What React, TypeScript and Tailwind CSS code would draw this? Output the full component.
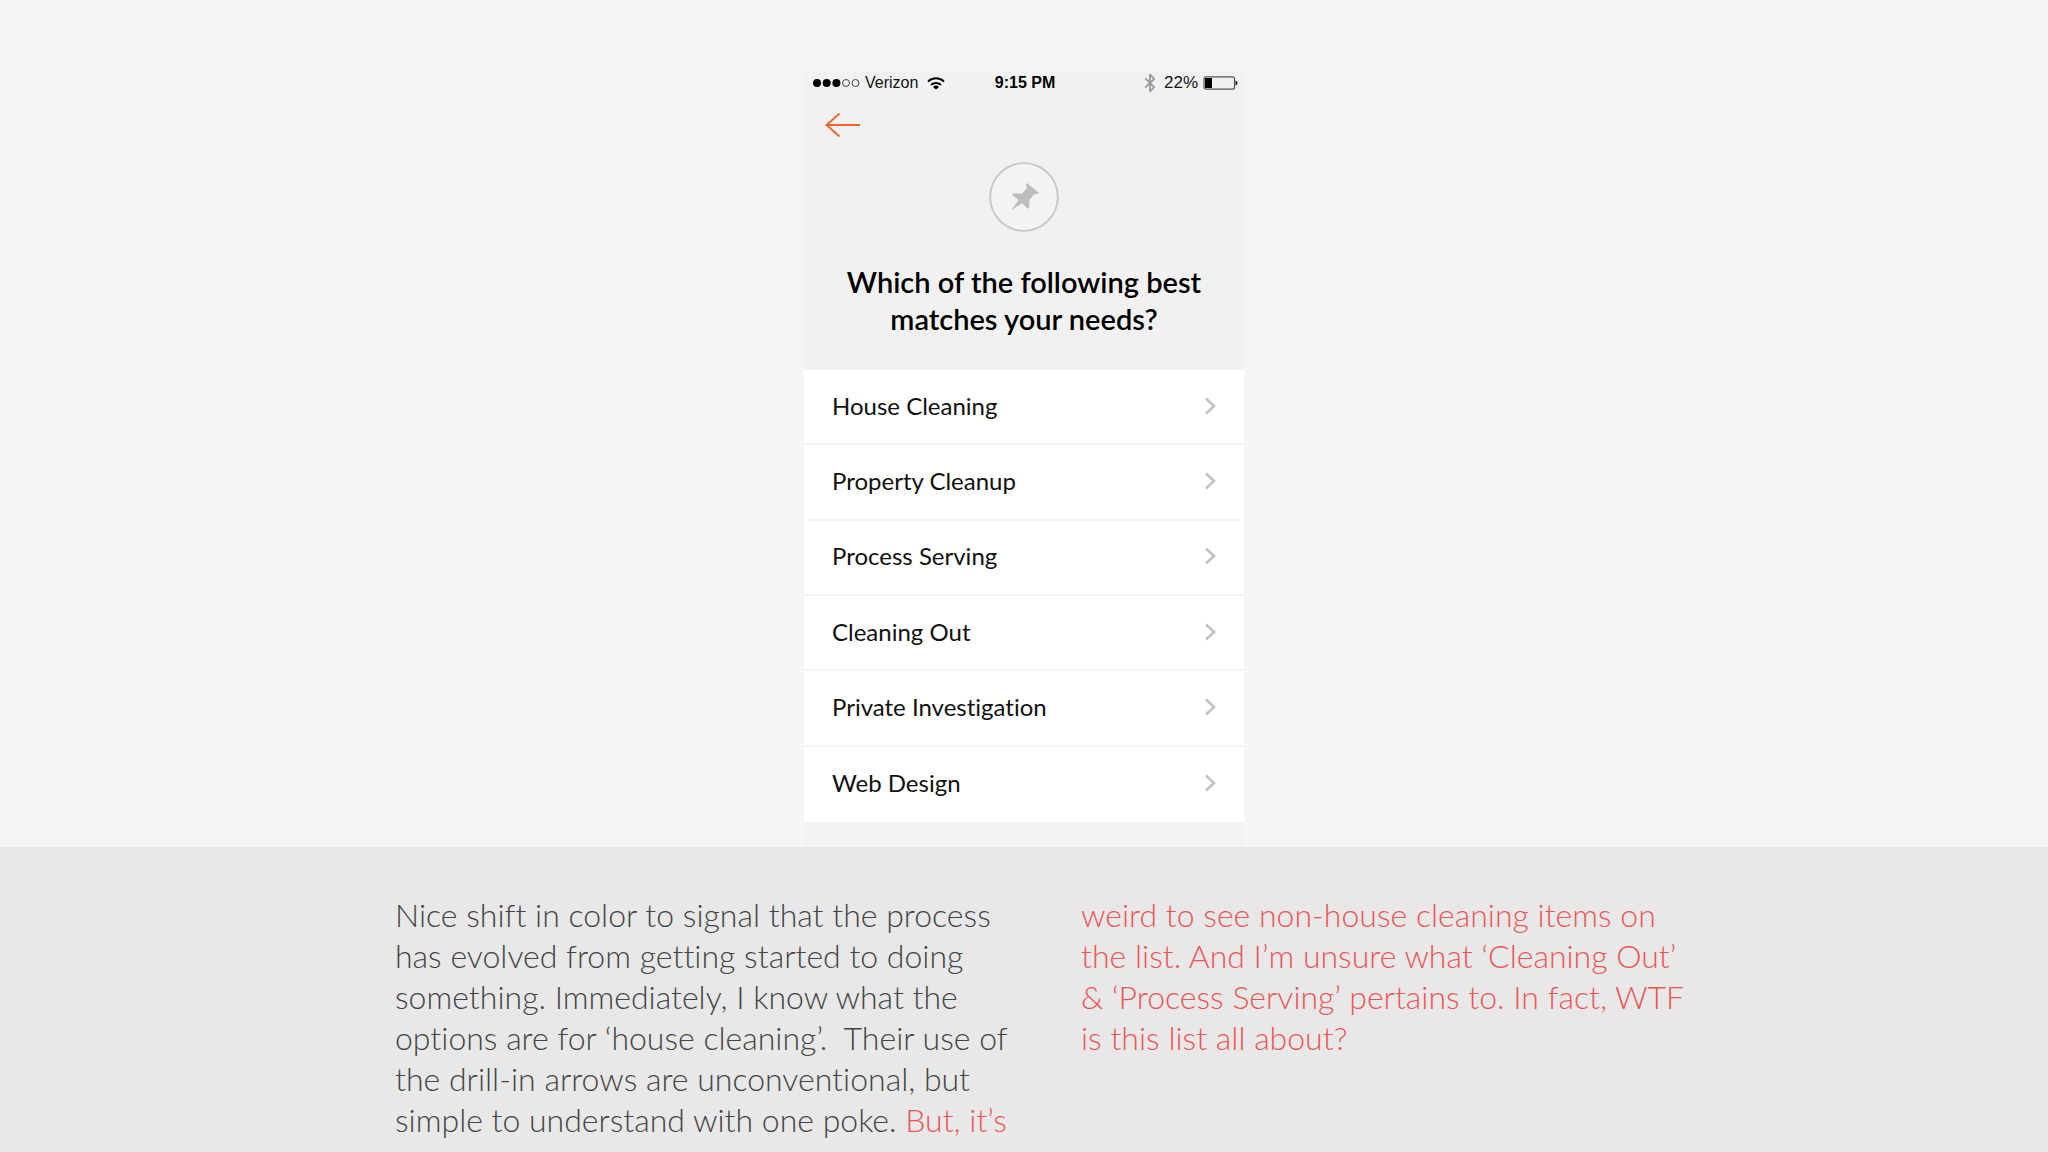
import { Bluetooth } from "lucide-react"

const services = [
    "House Cleaning",
    "Property Cleanup",
    "Process Serving",
    "Cleaning Out",
    "Private Investigation",
    "Web Design",
]

const StatusBar = () => {
    return (
        <div className="grid grid-cols-[1fr_auto_1fr] items-center h-6 pl-2 pr-1.5 font-['Liberation_Sans',sans-serif] text-base leading-6 text-[#111]">
            {/* carrier */}
            <div className="flex items-center">
                <svg width="48" height="10" viewBox="0 0 48 10" className="mr-[5px]">
                    <circle cx="5" cy="5" r="4" fill="#000"/>
                    <circle cx="14.7" cy="5" r="4" fill="#000"/>
                    <circle cx="24.4" cy="5" r="4" fill="#000"/>
                    <circle cx="34" cy="5" r="3.5" fill="none" stroke="#444"/>
                    <circle cx="43.5" cy="5" r="3.5" fill="none" stroke="#444"/>
                </svg>
                Verizon
                <svg width="18" height="13" viewBox="0 0 18 13" fill="none" stroke="#000" strokeWidth="2" className="ml-[9px]">
                    <path d="M1 4.6a11.4 11.4 0 0 1 16 0"/>
                    <path d="M4 7.9a7.2 7.2 0 0 1 10 0"/>
                    <path d="M9 12.6 6 9.9a4.3 4.3 0 0 1 6 0z" fill="#000" stroke="none"/>
                </svg>
            </div>
            {/* time */}
            <div className="font-bold text-black">9:15 PM</div>
            {/* battery */}
            <div className="flex items-center justify-end text-[17px]">
                <Bluetooth width={20} height={20} strokeWidth={2.2} className="text-[#999] mr-1"/>
                22%
                <svg width="35" height="14" viewBox="0 0 35 14" className="ml-[5px]">
                    <rect x="1" y="0.8" width="30.5" height="12.4" rx="2" fill="none" stroke="#555" strokeWidth="1.2"/>
                    <rect x="2" y="2" width="7" height="10" fill="#000"/>
                    <path d="M32.5 4.5q2 .6 2 2.5t-2 2.5z" fill="#111"/>
                </svg>
            </div>
        </div>
    )
}

const Phone = () => {
    return (
        <div className="w-[440px] mx-auto bg-[#f1f1f1] font-[Lato,sans-serif] [font-variant-ligatures:none]">
            <StatusBar/>
            {/* back */}
            <button type="button" aria-label="Back" className="block ml-[21px] mt-[17px] cursor-pointer">
                <svg width="36" height="26" viewBox="0 0 36 26" fill="none" stroke="#f4622a" strokeWidth="1.8">
                    <path d="M1.5 13H35M14.5 1.5 1.5 13l13 11.5"/>
                </svg>
            </button>
            {/* question */}
            <div className="flex flex-col items-center mt-6">
                <svg width="70" height="70" viewBox="0 0 70 70">
                    <circle cx="35" cy="35" r="33.8" fill="#f3f3f3" stroke="#c6c6c6" strokeWidth="1.8"/>
                    <path d="M38.5 21.5 49.5 30.5Q50.5 31.5 49 31.8L45.5 32.2 40.5 37.5 40 45.5Q39.5 47.5 38 46L33 41.2 22 48.5 29.5 38 23.5 33.2Q22.5 31.8 24.5 31.4L33 31.5 37.8 26.5 37 22.5Q37.3 20.8 38.5 21.5z" fill="#bdbdbd"/>
                </svg>
                <h1 className="w-[400px] mt-[31px] pb-[33px] text-center text-[29px] leading-[37px] font-semibold text-black">
                    Which of the following best<br/>matches your needs?
                </h1>
            </div>
            {/* options */}
            <ul className="grid grid-rows-6 h-[452px] bg-white divide-y-2 divide-[#f5f5f5]">
                {services.map((service) => (
                    <li key={service}>
                        <button type="button" className="flex items-center justify-between w-full h-full px-7 pb-0.5 text-2xl text-[#111] cursor-pointer">
                            {service}
                            <svg width="12" height="18" viewBox="0 0 12 18" fill="none" stroke="#c4c4c4" strokeWidth="2.8">
                                <path d="M2 1.5 10 9 2 16.5"/>
                            </svg>
                        </button>
                    </li>
                ))}
            </ul>
            <div className="h-[25px] bg-[#f3f3f3]"/>
        </div>
    )
}

const App = () => {
    return (
        <div className="flex flex-col min-h-screen bg-[#f5f5f5]">
            <main className="pt-[71px]">
                <Phone/>
            </main>
            {/* review notes */}
            <section className="flex-1 flex pl-[395px] pt-[47px] bg-[#e8e8e8] font-[Lato,sans-serif] font-light text-[32px] leading-[41px] text-[#444] whitespace-pre [font-variant-ligatures:none]">
                <p className="w-[686px]">
                    Nice shift in color to signal that the process<br/>
                    has evolved from getting started to doing<br/>
                    something. Immediately, I know what the<br/>
                    {"options are for ‘house cleaning’.  Their use of"}<br/>
                    the drill-in arrows are unconventional, but<br/>
                    simple to understand with one poke. <span className="text-[#ee5555]">But, it’s</span>
                </p>
                <p className="text-[#ee5555]">
                    weird to see non-house cleaning items on<br/>
                    the list. And I’m unsure what ‘Cleaning Out’<br/>
                    & ‘Process Serving’ pertains to. In fact, WTF<br/>
                    is this list all about?
                </p>
            </section>
        </div>
    )
}

export default App
